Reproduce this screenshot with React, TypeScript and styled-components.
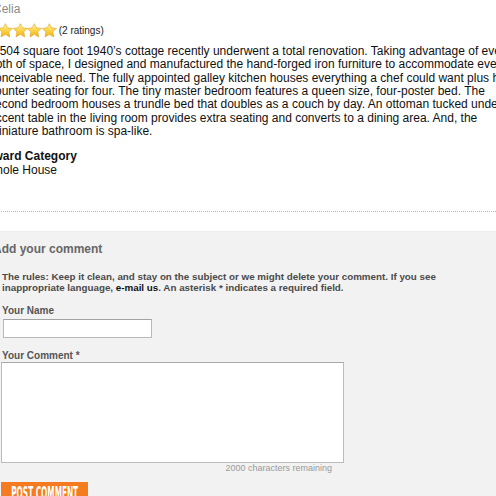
import styled, { createGlobalStyle } from "styled-components";

const GlobalStyle = createGlobalStyle`
  html, body {
    margin: 0;
    padding: 0;
    background: #fff;
    overflow: hidden;
  }
  body {
    font-family: "Liberation Sans", Arial, Helvetica, sans-serif;
  }
`;

const Page = styled.div`
  width: 496px;
  height: 496px;
  overflow: hidden;
`;

const Article = styled.article`
  margin-left: -11px;
  padding-top: 2px;
`;

const Byline = styled.div`
  margin-left: 4px;
  font-size: 12px;
  line-height: 14px;
  color: #8a8a8a;
`;

const RatingRow = styled.div`
  display: flex;
  align-items: center;
  margin-top: 7px;
  margin-left: 9px;
  height: 15px;
`;

const Stars = styled.div`
  display: flex;
`;

const RatingCount = styled.span`
  margin-left: 2px;
  font-size: 10px;
  color: #222;
`;

const Description = styled.p`
  margin: 7px 0 0;
  font-size: 12px;
  line-height: 13.35px;
  color: #111;
  white-space: nowrap;
`;

const Award = styled.div`
  margin: 11px 0 0 -4px;
  font-size: 12px;
  line-height: 14px;
  color: #111;
`;

const AwardTitle = styled.div`
  font-weight: bold;
`;

const Divider = styled.hr`
  margin: 34px 0 0;
  border: 0;
  border-top: 1px dotted #b5b5b5;
  height: 0;
`;

const CommentSection = styled.section`
  margin-top: 19px;
  background: #f2f2f2;
  padding: 10px 0 14px 2px;
  border-top: 1px solid #ececec;
`;

const SectionTitle = styled.h3`
  margin: 0 0 0 -9px;
  font-size: 12px;
  line-height: 14px;
  font-weight: bold;
  color: #666;
`;

const Rules = styled.p`
  margin: 15px 0 0;
  font-size: 9.8px;
  line-height: 11px;
  font-weight: bold;
  color: #4a4a4a;
  white-space: nowrap;
`;

const MailLink = styled.a`
  color: #111;
  text-decoration: none;
`;

const Label = styled.label<{ $gap: number }>`
  display: block;
  margin-top: ${p => p.$gap}px;
  font-size: 10px;
  line-height: 11px;
  font-weight: bold;
  color: #555;
`;

const NameInput = styled.input`
  display: block;
  box-sizing: border-box;
  margin: 3px 0 0 1px;
  width: 149px;
  height: 19px;
  border: 1px solid #b9b9b9;
  border-top-color: #a2a2a2;
  background: #fff;
  padding: 0 3px;
`;

const CommentBox = styled.div`
  width: 343px;
  margin-left: -1px;
`;

const CommentInput = styled.textarea`
  display: block;
  box-sizing: border-box;
  margin-top: 1px;
  width: 343px;
  height: 101px;
  border: 1px solid #bcbcbc;
  border-top-color: #a8a8a8;
  background: #fff;
  resize: none;
`;

const Counter = styled.div`
  padding-right: 12px;
  text-align: right;
  font-size: 9px;
  line-height: 10px;
  color: #9a9a9a;
`;

const PostButton = styled.button`
  display: flex;
  justify-content: center;
  align-items: flex-start;
  margin: 9px 0 0 -1px;
  width: 87px;
  height: 24px;
  padding: 0;
  border: 0;
  background: #f47b20;
  overflow: hidden;
  cursor: pointer;
`;

const ButtonText = styled.span`
  flex-shrink: 0;
  display: inline-block;
  font-family: "DejaVu Sans Condensed", "DejaVu Sans", sans-serif;
  font-stretch: condensed;
  font-weight: bold;
  font-size: 17px;
  line-height: 20px;
  color: #fff;
  transform: scaleX(0.48);
  transform-origin: center;
  white-space: nowrap;
  margin-top: 1px;
`;

const Star = ({ id }: { id: string }) => (
  <svg width="14.7" height="15" viewBox="0 0 15 14.5">
    <defs>
      <linearGradient id={id} x1="0" y1="0" x2="0" y2="1">
        <stop offset="0" stopColor="#fff3a6" />
        <stop offset="0.5" stopColor="#fbd548" />
        <stop offset="1" stopColor="#f2ad12" />
      </linearGradient>
    </defs>
    <path
      d="M7.5 0.3 L9.7 4.5 L14.7 5.1 L11.0 8.6 L11.95 13.9 L7.5 11.2 L3.05 13.9 L4.0 8.6 L0.3 5.1 L5.3 4.5 Z"
      fill={`url(#${id})`}
      stroke="#dca21c"
      strokeWidth="0.6"
      strokeLinejoin="round"
    />
  </svg>
);

const App = () => {
  return (
    <Page>
      <GlobalStyle />
      <Article>
        <Byline>Celia</Byline>
        <RatingRow>
          <Stars>
            {[0, 1, 2, 3].map(i => <Star key={i} id={`star-grad-${i}`} />)}
          </Stars>
          <RatingCount>(2 ratings)</RatingCount>
        </RatingRow>
        <Description>
          A 504 square foot 1940’s cottage recently underwent a total renovation. Taking advantage of every inch,<br />
          both of space, I designed and manufactured the hand-forged iron furniture to accommodate every<br />
          conceivable need. The fully appointed galley kitchen houses everything a chef could want plus has<br />
          counter seating for four. The tiny master bedroom features a queen size, four-poster bed. The<br />
          second bedroom houses a trundle bed that doubles as a couch by day. An ottoman tucked under an<br />
          accent table in the living room provides extra seating and converts to a dining area. And, the<br />
          miniature bathroom is spa-like.
        </Description>
        <Award>
          <AwardTitle>Award Category</AwardTitle>
          <div>Whole House</div>
        </Award>
        <Divider />
      </Article>
      <CommentSection>
        <SectionTitle>Add your comment</SectionTitle>
        <Rules>
          The rules: Keep it clean, and stay on the subject or we might delete your comment. If you see<br />
          inappropriate language, <MailLink href="#">e-mail us</MailLink>. An asterisk * indicates a required field.
        </Rules>
        <Label $gap={12} htmlFor="name">Your Name</Label>
        <NameInput id="name" type="text" />
        <Label $gap={12} htmlFor="comment">Your Comment *</Label>
        <CommentBox>
          <CommentInput id="comment" />
          <Counter>2000 characters remaining</Counter>
        </CommentBox>
        <PostButton type="button">
          <ButtonText>POST COMMENT</ButtonText>
        </PostButton>
      </CommentSection>
    </Page>
  );
};

export default App;
